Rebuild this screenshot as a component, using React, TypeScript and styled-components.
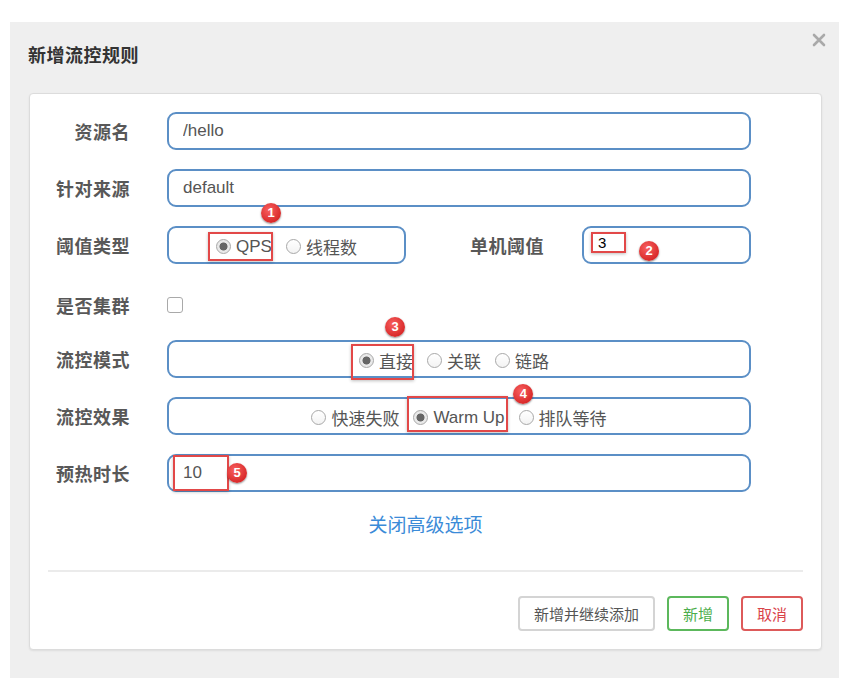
import React from "react";
import styled, { createGlobalStyle } from "styled-components";

const Global = createGlobalStyle`
  html, body { margin: 0; padding: 0; background: #ffffff; }
  body { font-family: "Liberation Sans", "Noto Sans CJK SC", sans-serif; }
  * { box-sizing: border-box; }
`;

const Page = styled.div`
  padding: 22px 5px 6px 10px;
`;

const Modal = styled.div`
  width: 829px;
  height: 656px;
  background: #efefef;
  display: flex;
  flex-direction: column;
`;

const Header = styled.div`
  height: 71px;
  display: flex;
  justify-content: space-between;
  align-items: flex-start;
  padding: 0 13px 0 18px;
`;

const Title = styled.h4`
  margin: 20px 0 0;
  font-family: "Noto Sans CJK SC", sans-serif;
  font-size: 18px;
  line-height: 24px;
  font-weight: 700;
  color: #333;
  letter-spacing: 0.5px;
`;

const Close = styled.button`
  margin-top: 11px;
  padding: 0;
  border: 0;
  background: none;
  width: 14px;
  height: 14px;
  display: flex;
  cursor: pointer;
`;

const Card = styled.div`
  margin: 0 17px 0 19px;
  height: 557px;
  background: #fff;
  border: 1px solid #dcdcdc;
  border-radius: 4px;
  box-shadow: 0 1px 2px rgba(0, 0, 0, 0.08);
  padding: 18px;
  display: flex;
  flex-direction: column;
`;

const Form = styled.div`
  display: flex;
  flex-direction: column;
  gap: 19px;
`;

const Row = styled.div<{ $shift?: number }>`
  height: 38px;
  display: flex;
  align-items: center;
  padding-top: ${(p) => p.$shift ?? 0}px;
`;

const Label = styled.label<{ $grow?: boolean }>`
  width: ${(p) => (p.$grow ? "auto" : "82px")};
  flex: ${(p) => (p.$grow ? "1" : "none")};
  margin-right: ${(p) => (p.$grow ? "38px" : "37px")};
  text-align: right;
  font-family: "Noto Sans CJK SC", sans-serif;
  font-weight: 700;
  font-size: 18px;
  color: #585858;
  line-height: 24px;
  letter-spacing: 0.5px;
`;

const Body = styled.div`
  width: 584px;
  display: flex;
  align-items: center;
`;

const Field = styled.div<{ $w?: number }>`
  position: relative;
  width: ${(p) => (p.$w ? `${p.$w}px` : "100%")};
  height: 38px;
`;

const Input = styled.input<{ $ink?: boolean }>`
  width: 100%;
  height: 38px;
  border: 2px solid #5b8fc6;
  border-radius: 9px;
  padding: 0 0 0 14px;
  font-family: "Liberation Sans", "Noto Sans CJK SC", sans-serif;
  font-size: ${(p) => (p.$ink ? "15px" : "17px")};
  color: ${(p) => (p.$ink ? "#000" : "#555")};
  background: #fff;
  outline: none;
  padding-bottom: ${(p) => (p.$ink ? "6px" : "0")};
`;

const ChoiceBox = styled.div<{ $w?: number; $padR?: number }>`
  width: ${(p) => (p.$w ? `${p.$w}px` : "100%")};
  height: 38px;
  border: 2px solid #5b8fc6;
  border-radius: 9px;
  display: flex;
  align-items: center;
  justify-content: center;
  gap: 14px;
  padding-top: 3px;
  padding-right: ${(p) => p.$padR ?? 0}px;
`;

const Option = styled.span`
  position: relative;
  display: inline-flex;
  align-items: center;
  gap: 5px;
  height: 22px;
  font-size: 17px;
  color: #555;
  font-family: "Liberation Sans", "Noto Sans CJK SC", sans-serif;
`;

const Dot = styled.span<{ $on?: boolean }>`
  width: 15px;
  height: 15px;
  border-radius: 50%;
  border: 1px solid #a8a8a8;
  background: ${(p) =>
    p.$on
      ? "radial-gradient(circle, #666 0 3.6px, #e9e9e9 4.4px)"
      : "linear-gradient(#fff, #f3f3f3)"};
  flex: none;
`;

const Mark = styled.span<{ $inset: string }>`
  position: absolute;
  inset: ${(p) => p.$inset};
  border: 2px solid #e24848;
  box-shadow: 0 1px 3px rgba(0, 0, 0, 0.25);
  pointer-events: none;
`;

const Badge = styled.span<{ $x: number; $y: number }>`
  position: absolute;
  left: ${(p) => p.$x}px;
  top: ${(p) => p.$y}px;
  width: 20px;
  height: 20px;
  border-radius: 50%;
  background: radial-gradient(circle at 40% 35%, #f86060, #d92a2a 70%);
  box-shadow: 0 1px 2px rgba(0, 0, 0, 0.45);
  color: #fff;
  font-family: "Liberation Sans", sans-serif;
  font-weight: 700;
  font-size: 13px;
  line-height: 20px;
  text-align: center;
`;

const Check = styled.span`
  width: 16px;
  height: 16px;
  border: 1px solid #a9a9a9;
  border-radius: 3px;
  background: #fff;
`;

const Toggle = styled.a`
  margin-top: 19px;
  align-self: center;
  font-family: "Noto Sans CJK SC", sans-serif;
  font-size: 19px;
  line-height: 26px;
  color: #3b8bd8;
  cursor: pointer;
`;

const Divider = styled.hr`
  margin: 33px 0 0;
  border: 0;
  height: 2px;
  background: #ebebeb;
`;

const Footer = styled.div`
  margin-top: 24px;
  display: flex;
  justify-content: flex-end;
  gap: 12px;
`;

const Btn = styled.button<{ $tone: "plain" | "ok" | "cancel" }>`
  height: 35px;
  padding: 0 14px;
  border-radius: 4px;
  background: #fff;
  font-family: "Noto Sans CJK SC", sans-serif;
  font-size: 15px;
  border: 2px solid
    ${(p) => (p.$tone === "ok" ? "#5cb85c" : p.$tone === "cancel" ? "#dd5a5a" : "#d4d4d4")};
  color: ${(p) => (p.$tone === "ok" ? "#4cae4c" : p.$tone === "cancel" ? "#d9434a" : "#555")};
  cursor: pointer;
`;

export default function App() {
  return (
    <>
      <Global />
      <Page>
        <Modal>
          <Header>
            <Title>新增流控规则</Title>
            <Close aria-label="close">
              <svg width="14" height="14" viewBox="0 0 14 14">
                <path d="M2 2 L12 12 M12 2 L2 12" stroke="#a9a9a9" strokeWidth="2.6" strokeLinecap="round" />
              </svg>
            </Close>
          </Header>
          <Card>
            <Form>
              <Row>
                <Label>资源名</Label>
                <Body>
                  <Field>
                    <Input readOnly value="/hello" />
                  </Field>
                </Body>
              </Row>
              <Row>
                <Label>针对来源</Label>
                <Body>
                  <Field>
                    <Input readOnly value="default" />
                  </Field>
                </Body>
              </Row>
              <Row>
                <Label>阈值类型</Label>
                <Body>
                  <ChoiceBox $w={239}>
                    <Option>
                      <Dot $on />
                      QPS
                      <Mark $inset="-4px -1px -3px -8px" />
                      <Badge $x={45} $y={-33}>1</Badge>
                    </Option>
                    <Option>
                      <Dot />
                      线程数
                    </Option>
                  </ChoiceBox>
                  <Label $grow>单机阈值</Label>
                  <Field $w={169}>
                    <Input $ink readOnly value="3" />
                    <Mark $inset="6px auto auto 9px" style={{ width: 35, height: 21 }} />
                    <Badge $x={57} $y={15}>2</Badge>
                  </Field>
                </Body>
              </Row>
              <Row $shift={6}>
                <Label>是否集群</Label>
                <Body>
                  <Check />
                </Body>
              </Row>
              <Row>
                <Label>流控模式</Label>
                <Body>
                  <ChoiceBox $padR={10}>
                    <Option>
                      <Dot $on />
                      直接
                      <Mark $inset="-6px -1px -8px -8px" />
                      <Badge $x={26} $y={-33}>3</Badge>
                    </Option>
                    <Option>
                      <Dot />
                      关联
                    </Option>
                    <Option>
                      <Dot />
                      链路
                    </Option>
                  </ChoiceBox>
                </Body>
              </Row>
              <Row>
                <Label>流控效果</Label>
                <Body>
                  <ChoiceBox>
                    <Option>
                      <Dot />
                      快速失败
                    </Option>
                    <Option>
                      <Dot $on />
                      Warm Up
                      <Mark $inset="-11px -3px -3px -6px" />
                      <Badge $x={100} $y={-23}>4</Badge>
                    </Option>
                    <Option>
                      <Dot />
                      排队等待
                    </Option>
                  </ChoiceBox>
                </Body>
              </Row>
              <Row>
                <Label>预热时长</Label>
                <Body>
                  <Field>
                    <Input readOnly value="10" />
                    <Mark $inset="1px auto auto 6px" style={{ width: 56, height: 36 }} />
                    <Badge $x={60} $y={9}>5</Badge>
                  </Field>
                </Body>
              </Row>
            </Form>
            <Toggle>关闭高级选项</Toggle>
            <Divider />
            <Footer>
              <Btn $tone="plain">新增并继续添加</Btn>
              <Btn $tone="ok">新增</Btn>
              <Btn $tone="cancel">取消</Btn>
            </Footer>
          </Card>
        </Modal>
      </Page>
    </>
  );
}
